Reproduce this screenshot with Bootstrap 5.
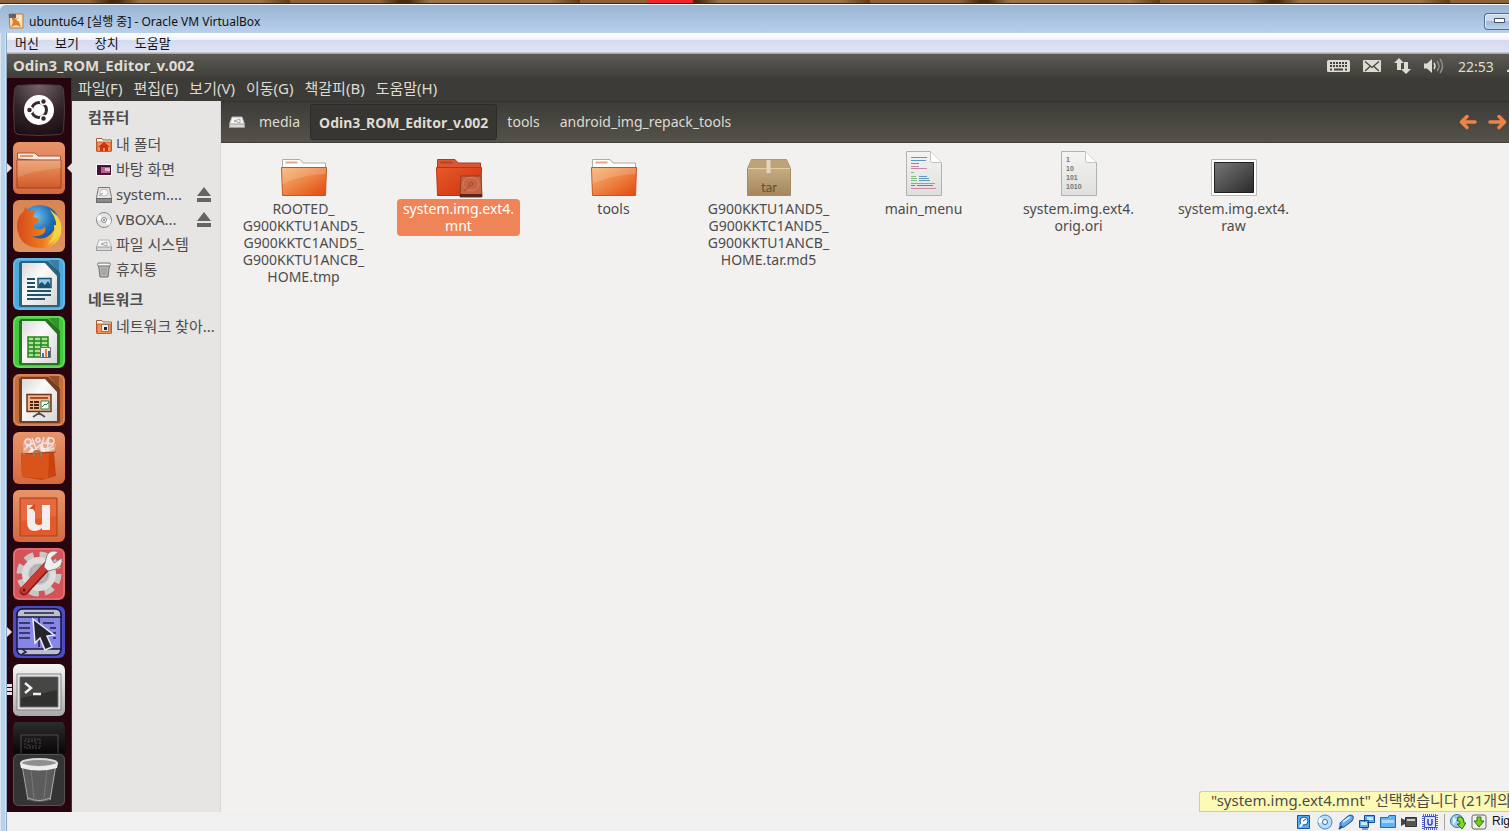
<!DOCTYPE html>
<html lang="ko">
<head>
    <meta charset="UTF-8">
    <meta name="viewport" content="width=device-width, initial-scale=1">
    <title>ubuntu64 [실행 중] - Oracle VM VirtualBox</title>
    <link href="https://cdn.jsdelivr.net/npm/bootstrap@5.3.0/dist/css/bootstrap.min.css" rel="stylesheet">
    <style>
        body { font-family: "Noto Sans", "Noto Sans CJK KR", sans-serif; font-size: 14px; line-height: 17px; color: #4c4c4c; background: #f0f0f0; }
        a { color: inherit; text-decoration: none; }
        button { padding: 0; border: 0; background: none; color: inherit; }
        svg { display: block; flex-shrink: 0; }

        /* host desktop and window frame */
        .wallpaper { height: 4px; border-bottom: 1px solid #2d2925; background: linear-gradient(90deg, transparent 42.9%, #e8262b 42.9% 45.9%, transparent 45.9%), repeating-linear-gradient(90deg, #8b6239 0 90px, #4a2a12 110px 118px, #9a744a 140px 260px, #5e3a1a 290px); }
        .vm-window { background: #b9d1ea; border-radius: 6px 0 0 0; border-top: 1px solid #fff; }
        .vm-title { height: 28px; font-size: 12px; color: #111; background: linear-gradient(#9ab5d3, #b8d0eb); border-radius: 6px 0 0 0; padding: 4px 0 0 8px; }
        .btn-min { width: 25px; height: 17px; border: 1px solid #536f8f; border-right: 0; border-radius: 4px 0 0 4px; background: linear-gradient(#c9dbee 45%, #9fbbd9 50%, #bcd3ea); box-shadow: inset 1px 1px 0 #e4eef8; }
        .frame-left { width: 7px; background: linear-gradient(90deg, #d9e5f1 1px, #b8d2ec 1px 5px, #d3e3f3 5px 6px, #8fa9c2 6px); }
        .vm-menu { height: 21px; font-size: 13px; color: #111; gap: 16px; padding-left: 8px; background: linear-gradient(#fff, #edf1f9 7px, #d6daef 7px, #dfe3f5 19px, #a8a8a8 20px); }

        /* guest desktop */
        .panel-top { height: 24px; color: #dfdbd2; background: linear-gradient(#5c5a52, #3f3e39); padding-left: 6px; }
        .panel-title { font-size: 15px; padding-bottom: 2px; }
        .panel-icons { width: 182px; gap: 13px; }
        .launcher { width: 65px; background: #26050f; padding: 6px 0 6px 6px; gap: 6px; box-shadow: inset -1px 0 0 #4b2a38; }
        .tile { width: 52px; height: 52px; position: relative; }
        .tile-folded { height: 32px; }
        .tile.running::before, .tile.active::after { content: ""; position: absolute; top: 21px; border: 5px solid transparent; }
        .tile.running::before { left: -6px; border-left-color: #e6e1e3; border-right: 0; }
        .tile.active::after { right: -7px; border-right-color: #e6e1e3; border-left: 0; }
        .tile.three::before { content: ""; position: absolute; left: -6px; top: 20px; width: 5px; height: 11px; background: repeating-linear-gradient(#e6e1e3 0 3px, transparent 3px 4px); }

        /* file manager */
        .app-menu { height: 23px; font-size: 15px; color: #dfdbd2; background: #3c3b37; gap: 11px; padding: 0 0 2px 6px; }
        .places { width: 149px; font-size: 15px; background: #e6e5e4; padding: 6px 0 0 16px; border-right: 1px solid #dad8d6; }
        .places h2 { font-size: 15px; line-height: 20px; font-weight: bold; margin: 0 0 5px; }
        .place { height: 25px; gap: 4px; padding-left: 8px; }
        .place-name { width: 66px; }
        .places ul + h2 { margin-top: 7px; }
        .pathbar { height: 42px; color: #dfdbd2; background: linear-gradient(#3c3b37, #55524a); border-top: 1px solid #34332f; border-bottom: 1px solid #403f3a; padding-left: 8px; }
        .crumb { padding: 0 10px 2px; height: 36px; }
        .crumb-here { padding: 0 8px; font-weight: bold; border: 1px solid #2c2b28; border-radius: 3px; background: #373632; }
        .files { background: #f2f1f0; padding: 7px 5px; }
        .file-item { width: 155px; }
        .file-name { padding: 1px 6px 2px; margin-top: 1px; border-radius: 4px; }
        .file-item.selected .file-name { background: #f08459; color: #fff; }
        .file-status { position: absolute; right: 0; bottom: 0; width: 310px; height: 21px; font-size: 15px; padding: 0 0 0 11px; background: #fdfab5; border: 1px solid #dbd36c; border-right: 0; border-radius: 3px 0 0 0; }
        .vm-status { height: 19px; background: #f0f0f0; color: #111; font-family: "Liberation Sans", sans-serif; font-size: 12px; }
        .vm-devices { width: 213px; gap: 5px; }
    </style>
</head>
<body>
<!-- shared gradients and icons -->
<svg width="0" height="0" class="position-absolute" aria-hidden="true">
    <defs>
        <linearGradient id="gFolder" x1="0" y1="0" x2="1" y2="1"><stop offset="0" stop-color="#f6b56f"/><stop offset=".45" stop-color="#ee8848"/><stop offset="1" stop-color="#e2470f"/></linearGradient>
        <linearGradient id="gFiles" x1="0" y1="0" x2="0" y2="1"><stop offset="0" stop-color="#e89a63"/><stop offset="1" stop-color="#d35a2c"/></linearGradient>
        <linearGradient id="gRed" x1="0" y1="0" x2="1" y2="1"><stop offset="0" stop-color="#e8592c"/><stop offset="1" stop-color="#cf300c"/></linearGradient>
        <linearGradient id="gOrange" x1="0" y1="0" x2="0" y2="1"><stop offset="0" stop-color="#e8946a"/><stop offset="1" stop-color="#d4693f"/></linearGradient>
        <linearGradient id="gPeach" x1="0" y1="0" x2="0" y2="1"><stop offset="0" stop-color="#d98552"/><stop offset="1" stop-color="#e09461"/></linearGradient>
        <linearGradient id="gPaper" x1="0" y1="0" x2="1" y2="1"><stop offset="0" stop-color="#d9d9d9"/><stop offset=".4" stop-color="#fafafa"/><stop offset="1" stop-color="#d6d6d6"/></linearGradient>
        <linearGradient id="gSheet" x1="0" y1="0" x2="0" y2="1"><stop offset="0" stop-color="#f4f4f3"/><stop offset="1" stop-color="#dfdfde"/></linearGradient>
        <linearGradient id="gDark" x1="0" y1="0" x2="1" y2="1"><stop offset="0" stop-color="#777"/><stop offset="1" stop-color="#2a2a2a"/></linearGradient>
        <linearGradient id="gTar" x1="0" y1="0" x2="0" y2="1"><stop offset="0" stop-color="#d2b98f"/><stop offset="1" stop-color="#a4865a"/></linearGradient>
        <linearGradient id="gSilver" x1="0" y1="0" x2="0" y2="1"><stop offset="0" stop-color="#f6f6f6"/><stop offset="1" stop-color="#a9a9a9"/></linearGradient>
        <radialGradient id="gDash" cx=".5" cy="0" r="1"><stop offset="0" stop-color="#75656b"/><stop offset=".6" stop-color="#33242a"/><stop offset="1" stop-color="#1d1014"/></radialGradient>
        <radialGradient id="gGlobe" cx=".4" cy=".3" r=".8"><stop offset="0" stop-color="#6cc2ee"/><stop offset=".5" stop-color="#226eb4"/><stop offset="1" stop-color="#133b7c"/></radialGradient>
        <linearGradient id="gFox" x1="0" y1="0" x2="1" y2="0"><stop offset="0" stop-color="#d5491b"/><stop offset=".6" stop-color="#ee7e1e"/><stop offset="1" stop-color="#fbe04c"/></linearGradient>
        <linearGradient id="gBlack" x1="0" y1="0" x2="0" y2="1"><stop offset="0" stop-color="#2d2b2c"/><stop offset="1" stop-color="#090607"/></linearGradient>
        <symbol id="folder" viewBox="0 0 48 48">
            <path d="M2.500 21V9.500H20l3 3.500h22.500V22z" fill="#fdfdfc" stroke="#b3aaa3"/>
            <path d="M5.500 12.500h12" stroke="#eaa682" stroke-width="2"/>
            <path d="M1.500 17.500h45l-1 28h-43z" fill="url(#gFolder)" stroke="#c85426"/>
            <path d="M2 18h44l-.4 6Q25 24 2.400 34z" fill="#fff" opacity=".16"/>
        </symbol>
        <symbol id="docTile" viewBox="0 0 52 52">
            <path d="M8 3h27l12 12v32q0 2-2 2H8q-2 0-2-2V5z" fill="#000" opacity=".42"/>
            <path d="M9 5h23l12 13v29H9z" fill="url(#gPaper)"/>
            <path d="M36 2h10v13z" fill="#000" opacity=".25"/>
        </symbol>
        <symbol id="drive" viewBox="0 0 16 16">
            <path d="M3 3h10l2.500 7v3H.5v-3z" fill="#f4f4f4" stroke="#b4b4b4"/><path d="M.5 10h15v3.500H.5z" fill="#d8d8d8" stroke="#9c9c9c"/>
            <path d="M11 5v4L5 7z" fill="none" stroke="#a9a9a9"/>
        </symbol>
        <symbol id="eject" viewBox="0 0 14 15"><path d="M7 0l7 9H0zM0 11h14v4H0z" fill="#666563"/></symbol>
    </defs>
</svg>

<div class="d-flex flex-column vh-100 overflow-hidden">
    <div class="wallpaper flex-shrink-0"></div>
    <div class="vm-window flex-grow-1 d-flex flex-column overflow-hidden">
        <header class="vm-title d-flex align-items-center flex-shrink-0">
            <svg width="17" height="16" viewBox="0 0 17 16"><path d="M1 1h14v14H2z" fill="#f6e2c8" stroke="#c8762c"/><path d="M3 3l5 3 6-3-3 6 2 5-5-2-5 2 2-5z" fill="#e77d1d"/><path d="M1 1h7v4H1z" fill="#5d6474"/><path d="M8 7l6-5-2 7z" fill="#fff3dd"/></svg>
            <span class="ms-1">ubuntu64 [실행 중] - Oracle VM VirtualBox</span>
            <button type="button" class="btn-min ms-auto d-flex align-items-center justify-content-end" aria-label="최소화"><svg width="16" height="6" viewBox="0 0 16 6"><path d="M1.500 .5h10v4h-10z" fill="#fff" stroke="#45536a"/></svg></button>
        </header>
        <div class="flex-grow-1 d-flex overflow-hidden">
            <div class="frame-left flex-shrink-0"></div>
            <div class="flex-grow-1 d-flex flex-column overflow-hidden">
                <nav class="vm-menu d-flex align-items-center flex-shrink-0">
                    <a href="#">머신</a><a href="#">보기</a><a href="#">장치</a><a href="#">도움말</a>
                </nav>

                <!-- guest top panel -->
                <div class="panel-top d-flex align-items-center flex-shrink-0">
                    <strong class="panel-title">Odin3_ROM_Editor_v.002</strong>
                    <div class="panel-icons ms-auto d-flex align-items-center">
                        <svg width="23" height="12" viewBox="0 0 23 12"><rect width="23" height="12" rx="1.500" fill="#dfdbd2"/><path d="M3 3h17M3 6h17" stroke="#45433e" stroke-width="2" stroke-dasharray="2 1"/><path d="M3 9.500h2m2 0h9m2 0h2" stroke="#45433e" stroke-width="2"/></svg>
                        <svg width="18" height="12" viewBox="0 0 18 12"><rect width="18" height="12" rx="1" fill="#dfdbd2"/><path d="M2 1.500l7 6 7-6M2 11l5-4.500M16 11l-5-4.500" fill="none" stroke="#45433e" stroke-width="1.300"/></svg>
                        <svg width="17" height="18" viewBox="0 0 17 18"><path d="M5 1l5 5H7v7H3V6H0zM10 5h4v7h3l-5 5-5-5h3z" fill="#dfdbd2"/></svg>
                        <svg width="21" height="16" viewBox="0 0 21 16"><path d="M0 5.500h3L8 1v14l-5-4.500H0z" fill="#dfdbd2"/><path d="M10 5q2 3 0 6" fill="none" stroke="#dfdbd2" stroke-width="1.500"/><path d="M13 3q4 5 0 10M16 1q5 7 0 14" fill="none" stroke="#918e86" stroke-width="1.500"/></svg>
                        <span>22:53</span>
                        <svg class="ms-auto" width="3" height="14" viewBox="0 0 3 14"><path d="M0 11h1l2-2v4H0z" fill="#dfdbd2"/></svg>
                    </div>
                </div>

                <div class="flex-grow-1 d-flex overflow-hidden">
                    <!-- launcher -->
                    <aside class="launcher d-flex flex-column flex-shrink-0">
                        <button type="button" class="tile" aria-label="대시 홈"><svg width="52" height="52" viewBox="0 0 52 52"><path d="M5 1.500q21-2 42 0 3 1 3.500 4 2 20 0 41-.5 3-3.500 4-21 2-42 0-3-1-3.500-4-2-21 0-41 .5-3 3.500-4z" fill="url(#gDash)" stroke="#4f3c44"/><circle cx="26" cy="26" r="15" fill="#fff"/><circle cx="26" cy="26" r="7.500" fill="none" stroke="#38282e" stroke-width="3"/><g fill="#38282e" stroke="#fff" stroke-width="1.500"><circle cx="16.500" cy="26" r="3"/><circle cx="30.500" cy="17.500" r="3"/><circle cx="30.500" cy="34.500" r="3"/></g></svg></button>
                        <button type="button" class="tile running active" aria-label="파일"><svg width="52" height="52" viewBox="0 0 52 52"><rect width="52" height="52" rx="6" fill="url(#gOrange)"/><path d="M4.500 17v-6H22l3 3h22.500v6z" fill="#f3e7e0" stroke="#a9562f"/><path d="M7 14h13" stroke="#e0946d" stroke-width="2"/><path d="M4 18h44v28H4z" fill="url(#gFiles)" stroke="#9b4320"/><path d="M4 18h44v8Q20 28 4 36z" fill="#fff" opacity=".14"/></svg></button>
                        <button type="button" class="tile" aria-label="Firefox"><svg width="52" height="52" viewBox="0 0 52 52"><rect width="52" height="52" rx="6" fill="url(#gPeach)"/><circle cx="27" cy="25" r="20" fill="url(#gGlobe)"/><path d="M4 27q0-11 7-16l1-4q2 3 5 4 3-1 6 0-3 3-3 6l6 2q1 3-5 5-2 4 3 5 5 1 8-2 2 5-4 8-5 2-9 1 10 6 19-2 8-8 4-21 8 8 6 20-3 14-20 15Q6 48 4 27z" fill="url(#gFox)"/><path d="M37 10q12 8 9 21-3 10-11 13 8-9 6-19 3 1 2-3-2-7-6-12z" fill="#f7d542"/></svg></button>
                        <button type="button" class="tile" aria-label="LibreOffice Writer"><svg width="52" height="52" viewBox="0 0 52 52"><rect width="52" height="52" rx="6" fill="#4ca9dc"/><rect x="1" y="1" width="50" height="50" rx="6" fill="none" stroke="#7cc5ea"/><use href="#docTile" width="52" height="52"/><path d="M14 21h8m-8 4h8m-8 4h8m-8 4h24m-24 4h24m-24 4h18" stroke="#20516d" stroke-width="2"/><path d="M25 20.500h13v9H25z" fill="#92c9e7" stroke="#20516d" stroke-width="1.500"/><path d="M26 29v-3l3-2 3 3 3-4 2 3v3z" fill="#20516d"/></svg></button>
                        <button type="button" class="tile" aria-label="LibreOffice Calc"><svg width="52" height="52" viewBox="0 0 52 52"><rect width="52" height="52" rx="6" fill="#45c83c"/><rect x="1" y="1" width="50" height="50" rx="6" fill="none" stroke="#7fe777"/><use href="#docTile" width="52" height="52"/><path d="M15 21h20v20H15z" fill="#a8e292"/><path d="M15 21h20v20H15zm0 4h20m-20 4h20m-20 4h20m-20 4h20M21 21v20m7-20v20" fill="none" stroke="#24851c" stroke-width="1.500"/><path d="M27.500 31.500h10v10h-10z" fill="#eee" stroke="#766"/><path d="M29 37h2v4h-2z" fill="#3875a8"/><path d="M32 33h2v8h-2z" fill="#e77d30"/><path d="M35 35h2v6h-2z" fill="#27669d"/></svg></button>
                        <button type="button" class="tile" aria-label="LibreOffice Impress"><svg width="52" height="52" viewBox="0 0 52 52"><rect width="52" height="52" rx="6" fill="#c66b3a"/><rect x="1" y="1" width="50" height="50" rx="6" fill="none" stroke="#e59c73"/><use href="#docTile" width="52" height="52"/><path d="M14 20.500h24v17H14z" fill="#f1b491" stroke="#6f3519" stroke-width="1.500"/><path d="M17 24h18" stroke="#a35028" stroke-width="2"/><path d="M17 28h3m-3 3h3m-3 3h3m1-6h5m-5 3h5m-5 3h5" stroke="#4b2414" stroke-width="2"/><path d="M28 27h8v8h-8z" fill="#f6fff6" stroke="#338256"/><path d="M29 33l3-3 1 1 3-3" fill="none" stroke="#27794a"/><path d="M26 38v2m0-1l-6 4m6-4l6 4" stroke="#555" stroke-width="2"/></svg></button>
                        <button type="button" class="tile" aria-label="우분투 소프트웨어 센터"><svg width="52" height="52" viewBox="0 0 52 52"><rect width="52" height="52" rx="6" fill="url(#gOrange)"/><path d="M10 23V10l6-4 4 3 4-4 5 4 5-4 5 5 4 2-2 12z" fill="#e8a58c"/><g fill="none" stroke="#eee4df" stroke-width="1.500"><circle cx="15" cy="10" r="3"/><circle cx="25" cy="8" r="2"/><circle cx="32" cy="14" r="3"/><circle cx="38" cy="9" r="3"/><path d="M11 18l5-5 5 6 6-6 4 7 9-7M19 6l5 13M31 5l-4 12M13 14l9-3M34 19l7-3M36 5l-3 6"/></g><path d="M15 21l4-6 3 5zM27 20l2-7 4 6z" fill="#f5efec"/><path d="M8 23l33-3 2 24-14 4-20-3z" fill="#c9430f"/><path d="M8 23l28-2-1 26-26-2z" fill="#d9541a"/><path d="M8 22l35-2" stroke="#9e3b15"/><path d="M21 25v-4q0-2 3-2t4 2v4" fill="none" stroke="#a5714f" stroke-width="2"/></svg></button>
                        <button type="button" class="tile" aria-label="Ubuntu One"><svg width="52" height="52" viewBox="0 0 52 52"><rect width="52" height="52" rx="6" fill="url(#gOrange)"/><path d="M7 8h37v38H7z" fill="#e4592a" stroke="#a34524"/><path d="M8 9h35v17L8 31z" fill="#fff" opacity=".1"/><path d="M14 15h8v17q0 3 4 3t3-3V15h8v25h-8v-2q-3 3-7 3-8 0-8-9z" fill="#f2eeec"/><path d="M22 13v9l-2-3h-4z" fill="#c8512b"/></svg></button>
                        <button type="button" class="tile" aria-label="시스템 설정"><svg width="52" height="52" viewBox="0 0 52 52"><rect width="52" height="52" rx="6" fill="#d45359"/><rect x="1" y="1" width="50" height="50" rx="6" fill="none" stroke="#e98488"/><circle cx="26" cy="26" r="19" fill="none" stroke="#c9c7c6" stroke-width="7" stroke-dasharray="9 5.920"/><circle cx="26" cy="26" r="14" fill="#c9c7c6" stroke="#dedddc" stroke-width="6"/><circle cx="26" cy="26" r="9" fill="#bcb7b6" stroke="#a39f9e"/><path d="M11 43L35 17" stroke="#87211e" stroke-width="9" stroke-linecap="round"/><path d="M11 42L31 20" stroke="#cb3a33" stroke-width="7" stroke-linecap="round"/><path d="M31 19l3-12q4-6 11-3l-7 6 3 5 8-5q1 8-6 11l-8 2z" fill="#efefee" stroke="#898584"/><circle cx="11" cy="42" r="1.500" fill="#671510"/></svg></button>
                        <button type="button" class="tile running" aria-label="xdotool"><svg width="52" height="52" viewBox="0 0 52 52"><rect width="52" height="52" rx="6" fill="#4c4bc2"/><rect x="4" y="3" width="44" height="45" rx="6" fill="#8686e4" stroke="#17173f" stroke-width="1.500"/><path d="M4 11V9q0-6 6-6h32q6 0 6 6v2zM4 43h44q0 6-6 6H10q-6 0-6-6z" fill="#bdbdcf" stroke="#17173f" stroke-width="1.500"/><path d="M11 7h30M6 17h11m-11 5h11M6 27h11M6 32h11m13-15h11m-4 5h6m-3 5h3m-3 5h3" stroke="#20204b" stroke-width="1.500"/><path d="M26 11v30" stroke="#20204b" stroke-width="1.500"/><path d="M9 43l4 3-4 2" fill="none" stroke="#20204b" stroke-width="1.500"/><path d="M20 13l2 24 5-5 5 12 7-3-5-11 7-1z" fill="#24242a" stroke="#e9e9ff" stroke-width="1.500"/></svg></button>
                        <button type="button" class="tile three" aria-label="터미널"><svg width="52" height="52" viewBox="0 0 52 52"><rect width="52" height="52" rx="6" fill="url(#gSilver)"/><path d="M4 10h44v36H4z" fill="#e2e2e2" stroke="#858585"/><path d="M7 13h38v30H7z" fill="#30302f" stroke="#777"/><path d="M8 14h36v12L8 34z" fill="#fff" opacity=".1"/><path d="M12 19l6 5-6 5M20 30h8" fill="none" stroke="#eeeeea" stroke-width="2.500"/></svg></button>
                        <div class="d-flex flex-column">
                            <button type="button" class="tile tile-folded" aria-label="작업 공간 전환"><svg width="52" height="32" viewBox="0 0 52 32"><path d="M2 0h48l2 5v26H0V5z" fill="url(#gBlack)"/><path d="M8 31V13h37v18" fill="none" stroke="#4a4849"/><path d="M12 17h15v9H12zM15 19h8v5h-8z" fill="none" stroke="#4a4849" stroke-dasharray="2 1"/></svg></button>
                            <button type="button" class="tile" aria-label="휴지통"><svg width="52" height="52" viewBox="0 0 52 52"><rect width="52" height="52" rx="5" fill="#353435"/><rect x=".5" y=".5" width="51" height="51" rx="5" fill="none" stroke="#555253"/><path d="M9 9h34l-5 37q-12 4-23 0z" fill="#5c5c5c"/><path d="M9 11l6 35M43 11l-6 35M15 44q11 5 22 0" fill="none" stroke="#a9a9a9"/><path d="M18 15l3 30m10 0l3-30" stroke="#777"/><ellipse cx="26" cy="9" rx="18" ry="4" fill="#8f8f8f" stroke="#d9d9d9" stroke-width="2"/><path d="M7 9q19 7 38 0l-1 5q-18 5-36 0z" fill="#ededed"/></svg></button>
                        </div>
                    </aside>

                    <!-- file manager -->
                    <div class="flex-grow-1 d-flex flex-column overflow-hidden">
                        <nav class="app-menu d-flex align-items-center flex-shrink-0">
                            <a href="#">파일(F)</a><a href="#">편집(E)</a><a href="#">보기(V)</a><a href="#">이동(G)</a><a href="#">책갈피(B)</a><a href="#">도움말(H)</a>
                        </nav>
                        <div class="flex-grow-1 d-flex overflow-hidden">
                            <aside class="places flex-shrink-0">
                                <h2>컴퓨터</h2>
                                <ul class="list-unstyled mb-0">
                                    <li><a href="#" class="place d-flex align-items-center"><svg width="16" height="16" viewBox="0 0 16 16"><path d="M.5 14V1.500H6l1 1.500h8.500v11z" fill="#fff" stroke="#a65b39"/><path d="M1 5h14v9.500H1z" fill="#ee9457" stroke="#d15a2b"/><path d="M8 5l6 5h-2v4H9v-3H7v3H4v-4H2z" fill="#cc360c"/></svg>내 폴더</a></li>
                                    <li><a href="#" class="place d-flex align-items-center"><svg width="16" height="16" viewBox="0 0 16 16"><path d="M1 3h14v10H1z" fill="#451434"/><path d="M5 5h9v6H5z" fill="#b86092"/><path d="M9 6h5v3H9z" fill="#e3b8cd"/><path d="M.5 2.500h15v11H.5z" fill="none" stroke="#fff"/></svg>바탕 화면</a></li>
                                    <li><a href="#" class="place d-flex align-items-center"><svg width="16" height="16" viewBox="0 0 16 16"><path d="M2.500 .5h11l2 10v5H.5v-5z" fill="#e5e5e5" stroke="#777"/><path d="M.5 11.500h15v4H.5z" fill="#8a8a8a" stroke="#666"/><ellipse cx="8" cy="5.500" rx="4" ry="3.500" fill="#f8f8f8" stroke="#bbb"/><path d="M7 6l-4 3" stroke="#999"/></svg><span class="place-name">system....</span><svg class="ms-2" width="18" height="15" viewBox="-3 0 18 15"><use href="#eject" width="14" height="15"/></svg></a></li>
                                    <li><a href="#" class="place d-flex align-items-center"><svg width="16" height="16" viewBox="0 0 16 16"><circle cx="8" cy="8" r="7.500" fill="#e4e4e4" stroke="#888"/><path d="M8 8L3 2.500Q1 4 1 8zM8 8l5 5.500Q15 12 15 8z" fill="#fff"/><circle cx="8" cy="8" r="2.500" fill="#fff" stroke="#888"/><circle cx="8" cy="8" r="1" fill="#777"/></svg><span class="place-name">VBOXA...</span><svg class="ms-2" width="18" height="15" viewBox="-3 0 18 15"><use href="#eject" width="14" height="15"/></svg></a></li>
                                    <li><a href="#" class="place d-flex align-items-center"><svg width="16" height="16"><use href="#drive"/></svg>파일 시스템</a></li>
                                    <li><a href="#" class="place d-flex align-items-center"><svg width="16" height="16" viewBox="0 0 16 16"><path d="M2.500 3h11l-1.500 12H4z" fill="#b5b5b4" stroke="#70706f"/><path d="M6 6v7m2-7v7m2-7v7" stroke="#999"/><rect x="1.500" y="1" width="13" height="3" rx="1.500" fill="#f5f5f5" stroke="#70706f"/></svg>휴지통</a></li>
                                </ul>
                                <h2>네트워크</h2>
                                <ul class="list-unstyled mb-0">
                                    <li><a href="#" class="place d-flex align-items-center text-nowrap"><svg width="16" height="16" viewBox="0 0 16 16"><path d="M.5 14V1.500H6l1 1.500h8.500v11z" fill="#fff" stroke="#a65b39"/><path d="M1 5h14v9.500H1z" fill="#ee9457" stroke="#d15a2b"/><path d="M5.500 5.500h7v7h-7z" fill="#eee" stroke="#876"/><path d="M8 8h3v3H8z" fill="#222"/></svg>네트워크 찾아...</a></li>
                                </ul>
                            </aside>

                            <main class="flex-grow-1 d-flex flex-column overflow-hidden">
                                <nav class="pathbar d-flex align-items-center flex-shrink-0">
                                    <svg width="16" height="16"><use href="#drive"/></svg>
                                    <a href="#" class="crumb d-flex align-items-center ms-1">media</a>
                                    <a href="#" class="crumb crumb-here d-flex align-items-center">Odin3_ROM_Editor_v.002</a>
                                    <a href="#" class="crumb d-flex align-items-center">tools</a>
                                    <a href="#" class="crumb d-flex align-items-center">android_img_repack_tools</a>
                                    <div class="ms-auto d-flex gap-2">
                                        <button type="button" aria-label="뒤로"><svg width="22" height="16" viewBox="0 0 22 16"><path d="M17 8H4m5-5.500L3.500 8 9 13.500" fill="none" stroke="#ef8245" stroke-width="3.500" stroke-linecap="round" stroke-linejoin="round"/></svg></button>
                                        <button type="button" aria-label="앞으로"><svg width="21" height="16" viewBox="0 0 21 16"><path d="M2 8h14m-5-5.500L16.500 8 11 13.500" fill="none" stroke="#ef8245" stroke-width="3.500" stroke-linecap="round" stroke-linejoin="round"/></svg></button>
                                    </div>
                                </nav>
                                <div class="files flex-grow-1 position-relative">
                                    <div class="d-flex flex-wrap align-items-start text-center">
                                        <button type="button" class="file-item d-flex flex-column align-items-center">
                                            <svg width="48" height="48"><use href="#folder"/></svg>
                                            <span class="file-name">ROOTED_<br>G900KKTU1AND5_<br>G900KKTC1AND5_<br>G900KKTU1ANCB_<br>HOME.tmp</span>
                                        </button>
                                        <button type="button" class="file-item selected d-flex flex-column align-items-center">
                                            <svg width="48" height="48" viewBox="0 0 48 48"><path d="M2.500 21V9.500H20l3 3.500h22.500V22z" fill="#dc5632" stroke="#ad3d1d"/><path d="M5.500 12.500h12" stroke="#b74221" stroke-width="2"/><path d="M1.500 17.500h45l-1 28h-43z" fill="url(#gRed)" stroke="#b83512"/><path d="M26 26h20l1 21H25z" fill="#c86344" stroke="#8f3d25"/><path d="M25 44h22v3H25z" fill="#5b2517"/><ellipse cx="36" cy="34" rx="8" ry="6.500" fill="none" stroke="#d9805f"/><circle cx="36" cy="34" r="2" fill="none" stroke="#a34b30"/><path d="M35 36l-6 5" stroke="#a34b30"/></svg>
                                            <span class="file-name">system.img.ext4.<br>mnt</span>
                                        </button>
                                        <button type="button" class="file-item d-flex flex-column align-items-center">
                                            <svg width="48" height="48"><use href="#folder"/></svg>
                                            <span class="file-name">tools</span>
                                        </button>
                                        <button type="button" class="file-item d-flex flex-column align-items-center">
                                            <svg width="48" height="48" viewBox="0 0 48 48"><path d="M6.500 9.500h35l4 9v27h-43v-27z" fill="url(#gTar)" stroke="#a78b60"/><path d="M6.500 9.500h35l3.500 8.500H3z" fill="#bfa378"/><path d="M3 18.500h42" stroke="#e2cda6"/><path d="M21.500 10h4v13h-4z" fill="#e2d5bb"/><text x="24" y="42" text-anchor="middle" font-family="Lato, sans-serif" font-size="13" fill="#65502f">tar</text></svg>
                                            <span class="file-name">G900KKTU1AND5_<br>G900KKTC1AND5_<br>G900KKTU1ANCB_<br>HOME.tar.md5</span>
                                        </button>
                                        <button type="button" class="file-item d-flex flex-column align-items-center">
                                            <svg width="48" height="48" viewBox="0 0 48 48"><path d="M6.500 1.500h24l11 11v33h-35z" fill="url(#gSheet)" stroke="#b2b2b1"/><path d="M30.500 1.500v9q0 2 2 2h9" fill="#fff" stroke="#c4c4c3"/><path d="M11 7.500h16M11 10.500h15M11 13.500h8" stroke="#5a98c6"/><path d="M11 16.500h8M11 18.500h16M11 33.500h24M11 38.500h25" stroke="#c987a3"/><path d="M11 22.500h3M11 26.500h5m-5 2h6m-6 2h6" stroke="#83bd83"/><path d="M19 26.500h8m-8 2h10m-10 2h11" stroke="#659ac0"/><path d="M11 35.500h4m2 0h16" stroke="#b8647f"/></svg>
                                            <span class="file-name">main_menu</span>
                                        </button>
                                        <button type="button" class="file-item d-flex flex-column align-items-center">
                                            <svg width="48" height="48" viewBox="0 0 48 48"><path d="M6.500 1.500h24l11 11v33h-35z" fill="url(#gSheet)" stroke="#b2b2b1"/><path d="M30.500 1.500v9q0 2 2 2h9" fill="#fff" stroke="#c4c4c3"/><g font-family="Liberation Sans, sans-serif" font-size="7" font-weight="bold" fill="#777"><text x="11" y="12">1</text><text x="11" y="21">10</text><text x="11" y="30">101</text><text x="11" y="39">1010</text></g></svg>
                                            <span class="file-name">system.img.ext4.<br>orig.ori</span>
                                        </button>
                                        <button type="button" class="file-item d-flex flex-column align-items-center">
                                            <svg width="48" height="48" viewBox="0 0 48 48"><path d="M1.500 9.500h45v36h-45z" fill="#fff" stroke="#bdbcbb"/><path d="M4.500 12.500h39v30h-39z" fill="url(#gDark)" stroke="#1e1e1e"/></svg>
                                            <span class="file-name">system.img.ext4.<br>raw</span>
                                        </button>
                                    </div>
                                    <div class="file-status text-nowrap overflow-hidden">"system.img.ext4.mnt" 선택했습니다 (21개의 항</div>
                                </div>
                            </main>
                        </div>
                    </div>
                </div>

                <!-- virtual machine status bar -->
                <footer class="vm-status d-flex align-items-center flex-shrink-0">
                    <div class="vm-devices ms-auto d-flex align-items-center text-nowrap">
                        <svg width="16" height="16" viewBox="0 0 16 16"><path d="M1.500 1.500h12v13h-12z" fill="#5aa9ea" stroke="#1856a8"/><circle cx="8" cy="7" r="4" fill="#e9f5ff" stroke="#1856a8"/><path d="M8 7l-4 6" stroke="#fff" stroke-width="2"/><path d="M7 7l3-2" stroke="#1856a8"/></svg>
                        <svg width="16" height="16" viewBox="0 0 16 16"><circle cx="8" cy="8" r="7" fill="#b9dcf8" stroke="#4385c7"/><path d="M8 8L3 3Q1 5 1.500 9z" fill="#fff"/><circle cx="8" cy="8" r="2.500" fill="#fff" stroke="#2869b4"/></svg>
                        <svg width="16" height="16" viewBox="0 0 16 16"><path d="M2 9l8-7q3-2 5 0 1 2-1 5l-8 6-4 1z" fill="#64a9e8" stroke="#1a519c"/><path d="M5 8l7-5" stroke="#cfeaff" stroke-width="2"/><path d="M1 15l3-3" stroke="#1a519c" stroke-width="2"/></svg>
                        <svg width="16" height="16" viewBox="0 0 16 16"><path d="M5.500 1.500h10v7h-10zM.5 6.500h9v7h-9z" fill="#5baaf2" stroke="#184b91"/><path d="M2 8h6v3H2zM8 3h6v3H8z" fill="#c6e8ff"/><path d="M3 15h6" stroke="#184b91"/></svg>
                        <svg width="16" height="16" viewBox="0 0 16 16"><path d="M.5 13.500v-10H8l1-2h6.500v12z" fill="#61b3f6" stroke="#2668b2"/><path d="M2 6h12v3H2z" fill="#a7dafc"/></svg>
                        <svg width="16" height="16" viewBox="0 0 16 16"><path d="M0 4l4 2v4l-4 2z" fill="#444"/><path d="M4.500 3.500h11v9h-11z" fill="#555" stroke="#333"/><path d="M6 5h8v2H6z" fill="#ccc"/></svg>
                        <svg width="16" height="16" viewBox="0 0 16 16"><rect x="1" y="1" width="14" height="14" fill="none" stroke="#5462cc" stroke-width="2" stroke-dasharray="1 1"/><path d="M2.500 2.500h11v11h-11z" fill="#dde4ff" stroke="#3947bd"/><path d="M6 5v4q0 2 2 2t2-2V5" fill="none" stroke="#3947bd" stroke-width="1.500"/></svg>
                        <svg width="2" height="16" viewBox="0 0 2 16"><path d="M1.500 0v16" stroke="#a5a5a5"/></svg>
                        <svg width="16" height="16" viewBox="0 0 16 16"><circle cx="7" cy="7" r="6.500" fill="#9bcaf0" stroke="#3973af"/><path d="M3 3l4 3-4 5z" fill="#e6f5ff"/><path d="M8 3q6-1 6 6h2l-4 6-5-5h3q0-4-3-3z" fill="#83d827" stroke="#2c6b12"/></svg>
                        <svg width="16" height="16" viewBox="0 0 16 16"><rect x="1" y="1" width="14" height="14" rx="2" fill="#eee" stroke="#666"/><path d="M6 3h4v4h3l-5 6-5-6h3z" fill="#76cc1c" stroke="#32740d"/></svg>
                        <span>Rig</span>
                    </div>
                </footer>
            </div>
        </div>
    </div>
</div>
<script src="https://cdn.jsdelivr.net/npm/bootstrap@5.3.0/dist/js/bootstrap.bundle.min.js"></script>
</body>
</html>
